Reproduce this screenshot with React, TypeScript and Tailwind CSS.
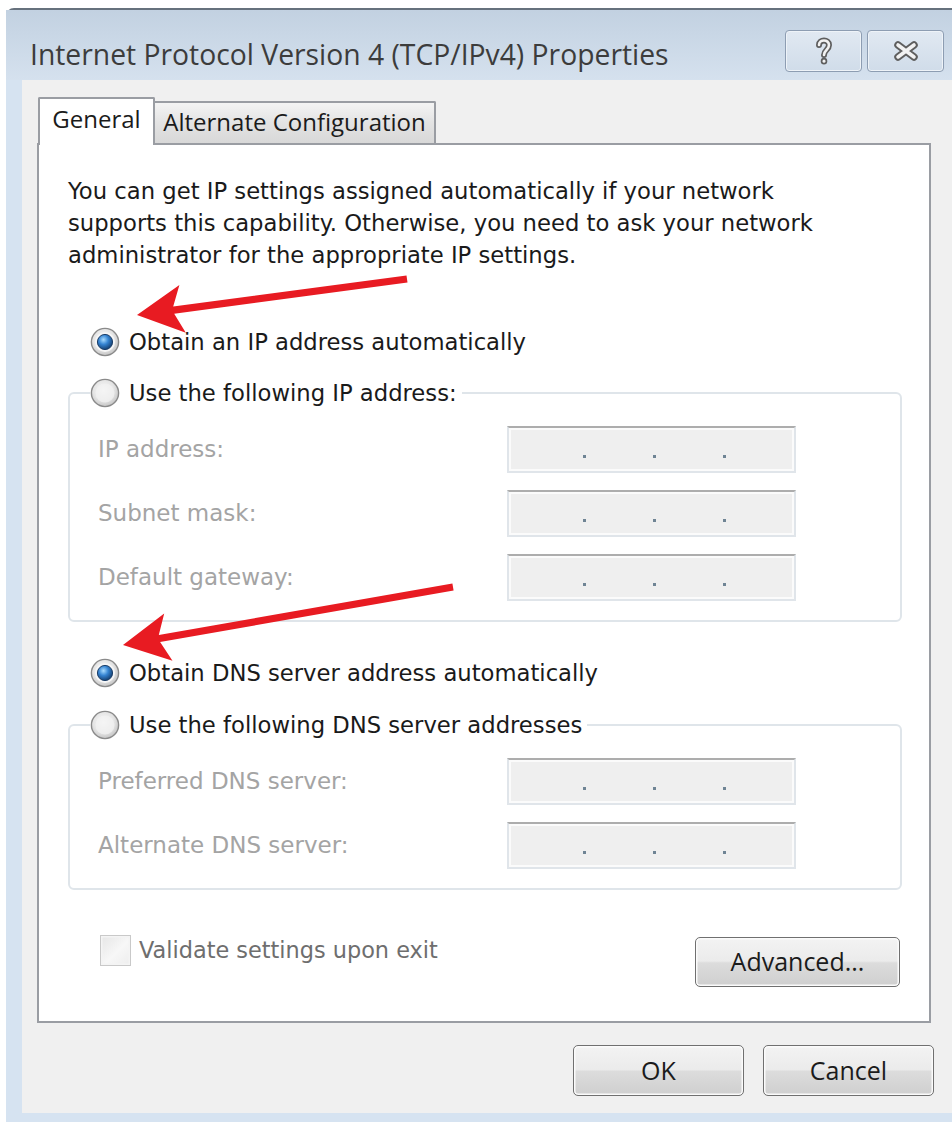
const ui = "font-['Open_Sans',sans-serif]";
const dlg = "font-['DejaVu_Sans',sans-serif]";

function Radio({ checked }: { checked?: boolean }) {
	return (
		<svg width="30" height="30" viewBox="0 0 30 30" className="shrink-0">
			<defs>
				<radialGradient id="rb-well" cx="45%" cy="40%" r="65%">
					<stop offset="0" stopColor="#fafafa" />
					<stop offset="0.6" stopColor="#e4e4e4" />
					<stop offset="1" stopColor="#bdbdbd" />
				</radialGradient>
				<radialGradient id="rb-dot" cx="40%" cy="35%" r="70%">
					<stop offset="0" stopColor="#a8dcff" />
					<stop offset="0.45" stopColor="#3584d2" />
					<stop offset="1" stopColor="#113866" />
				</radialGradient>
			</defs>
			<circle cx="15" cy="15" r="13.6" fill="url(#rb-well)" stroke="#8a8a8a" strokeWidth="1.4" />
			{checked ? (
				<>
					<circle cx="15" cy="15" r="10" fill="#f6f6f6" />
					<circle cx="15" cy="15" r="7.6" fill="url(#rb-dot)" stroke="#1d3f68" strokeWidth="1" />
				</>
			) : (
				<circle cx="15" cy="15" r="9.5" fill="#f2f2f2" opacity="0.7" />
			)}
		</svg>
	);
}

function IpBox() {
	return (
		<div className="h-[47px] w-[289px] shrink-0 border-2 border-[#e0e5ea] border-t-[#adadad] bg-[#efefef] shadow-[inset_0_0_0_2px_#fbfbfb]">
			<div className="flex gap-[67px] pl-[74px] pt-[27px]">
				<span className="size-[3px] bg-[#6f8494]" />
				<span className="size-[3px] bg-[#6f8494]" />
				<span className="size-[3px] bg-[#6f8494]" />
			</div>
		</div>
	);
}

function Field({ label }: { label: string }) {
	return (
		<div className="flex items-center">
			<span className="w-[409px] text-[23px] text-[#a4a4a4]">{label}</span>
			<IpBox />
		</div>
	);
}

function Group({ title, fields }: { title: string; fields: string[] }) {
	return (
		<fieldset className="ml-[29px] w-[834px] rounded-[6px] border-2 border-[#dfe5ea] pb-[19px]">
			<legend className="ml-[20px] flex h-[30px] items-center gap-[9px] pr-[5px]">
				<Radio />
				<span className="text-[22.7px] leading-[30px] text-[#1a1a1a]">{title}</span>
			</legend>
			<div className="flex flex-col gap-[17px] pl-[28px] pt-[18px]">
				{fields.map((f) => (
					<Field key={f} label={f} />
				))}
			</div>
		</fieldset>
	);
}

function RadioRow({ label, checked }: { label: string; checked?: boolean }) {
	return (
		<div className="ml-[51px] flex h-[30px] items-center gap-[9px]">
			<Radio checked={checked} />
			<span className="text-[22.7px] leading-[30px] text-[#1a1a1a]">{label}</span>
		</div>
	);
}

function Button({ label, w, h }: { label: string; w: string; h: string }) {
	return (
		<button
			type="button"
			className={`${ui} ${w} ${h} rounded-[5px] border-[1.5px] border-[#707070] bg-[linear-gradient(#f3f3f3_0%,#ebebeb_48%,#dcdcdc_52%,#cfcfcf_100%)] text-[25px] text-[#1b1b1b] shadow-[inset_0_0_0_1.5px_#fbfbfb]`}
		>
			{label}
		</button>
	);
}

function CaptionButton({ children }: { children: React.ReactNode }) {
	return (
		<div className="flex h-[42px] w-[77px] items-center justify-center rounded-[4px] border-[1.5px] border-[#8d9db2] bg-[linear-gradient(#e1e9f2,#d0dce9)] shadow-[inset_0_0_0_1px_#eef3f8]">
			{children}
		</div>
	);
}

// arrow polygon from tip back to tail: notched head plus a straight shaft
function arrowPoints(tip: [number, number], tail: [number, number]) {
	const [tx, ty] = tip;
	const len = Math.hypot(tail[0] - tx, tail[1] - ty);
	const ux = (tail[0] - tx) / len;
	const uy = (tail[1] - ty) / len;
	const nx = -uy;
	const ny = ux;
	const p = (a: number, b: number) => `${(tx + ux * a + nx * b).toFixed(1)},${(ty + uy * a + ny * b).toFixed(1)}`;
	return [p(0, 0), p(46, -24), p(37, -3.6), p(len, -3.6), p(len, 3.6), p(37, 3.6), p(46, 24)].join(" ");
}

export default function App() {
	return (
		<div className={`${dlg} relative h-[1122px] w-[952px] overflow-hidden bg-white pl-[6px] pt-[8px]`}>
			<div className="flex h-full flex-col rounded-tl-[8px] border-t-2 border-[#66717d] bg-[#d6e3f1]">
				{/* caption */}
				<div className="flex h-[70px] shrink-0 items-start justify-between bg-[linear-gradient(#c2d1e1,#d5e1ee)] pr-[8px] pl-[24px]">
					<span className={`${ui} mt-[29px] text-[28.3px] leading-[30px] text-[#3c3c3c]`}>
						Internet Protocol Version 4 (TCP/IPv4) Properties
					</span>
					<div className="mt-[20px] flex gap-[5px]">
						<CaptionButton>
							<svg width="20" height="28" viewBox="-10 -14 20 28">
								<g fill="none" strokeLinecap="round" strokeLinejoin="round">
									<path d="M-5 -6 C-5 -12 5 -12 5 -6 C5 -1 0 -1 0 4" stroke="#5e5e5e" strokeWidth="6" />
									<path d="M-5 -6 C-5 -12 5 -12 5 -6 C5 -1 0 -1 0 4" stroke="#f2f2f2" strokeWidth="2.6" />
									<path d="M0 10 L0 10.2" stroke="#5e5e5e" strokeWidth="6.5" />
									<path d="M0 10 L0 10.2" stroke="#f2f2f2" strokeWidth="3" />
								</g>
							</svg>
						</CaptionButton>
						<CaptionButton>
							<svg width="28" height="24" viewBox="-14 -12 28 24">
								<g fill="none" strokeLinecap="round">
									<path d="M-8 -6 L8 6 M-8 6 L8 -6" stroke="#5e5e5e" strokeWidth="7.5" />
									<path d="M-8 -6 L8 6 M-8 6 L8 -6" stroke="#f2f2f2" strokeWidth="3.6" />
								</g>
							</svg>
						</CaptionButton>
					</div>
				</div>

				<div className="flex flex-1">
					<div className="w-[16px] shrink-0" />
					<div className="flex flex-1 flex-col bg-[#f0f0f0] pl-[15px] pt-[17px]">
						{/* tabs */}
						<div className="relative z-10 -mb-[2px] ml-[1px] flex h-[48px] items-end">
							<div className={`${ui} flex h-[48px] w-[117px] items-start justify-center rounded-t-[2px] border-2 border-b-0 border-[#9a9da3] bg-white pt-[5px] text-[24px] leading-[30px] text-[#1b1b1b]`}>
								General
							</div>
							<div className={`${ui} mb-[2px] flex h-[42px] w-[281px] items-start justify-center rounded-tr-[2px] border-2 border-l-0 border-b-0 border-[#9a9da3] bg-[linear-gradient(#f4f4f4,#e3e3e3_50%,#d8d8d8)] pt-[4px] text-[24px] leading-[30px] text-[#1b1b1b]`}>
								Alternate Configuration
							</div>
						</div>

						{/* page */}
						<div className="h-[880px] w-[894px] border-2 border-[#9a9da3] bg-white">
							<p className="pl-[29px] pt-[30px] text-[22.7px] leading-[32px] text-[#1a1a1a]">
								You can get IP settings assigned automatically if your network
								<br />
								supports this capability. Otherwise, you need to ask your network
								<br />
								administrator for the appropriate IP settings.
							</p>

							<div className="mt-[56px]">
								<RadioRow label="Obtain an IP address automatically" checked />
							</div>
							<div className="mt-[21px]">
								<Group title="Use the following IP address:" fields={["IP address:", "Subnet mask:", "Default gateway:"]} />
							</div>

							<div className="mt-[36px]">
								<RadioRow label="Obtain DNS server address automatically" checked />
							</div>
							<div className="mt-[22px]">
								<Group title="Use the following DNS server addresses" fields={["Preferred DNS server:", "Alternate DNS server:"]} />
							</div>

							<div className="mt-[45px] ml-[29px] flex w-[834px] items-start justify-between pl-[32px] pr-[2px]">
								<div className="flex items-center gap-[8px]">
									<div className="size-[31px] border-[1.5px] border-[#c9c9c9] bg-[linear-gradient(135deg,#e6e6e6,#f7f7f7_55%,#ededed)] shadow-[inset_0_0_0_1.5px_#f4f4f4]" />
									<span className="text-[22.4px] leading-[31px] text-[#6e6e6e]">Validate settings upon exit</span>
								</div>
								<div className="mt-[2px]">
									<Button label="Advanced..." w="w-[205px]" h="h-[50px]" />
								</div>
							</div>
						</div>

						<div className="mt-[22px] flex justify-end gap-[19px] pr-[18px]">
							<Button label="OK" w="w-[171px]" h="h-[51px]" />
							<Button label="Cancel" w="w-[171px]" h="h-[51px]" />
						</div>
					</div>
				</div>

				<div className="h-[9px] shrink-0" />
			</div>

			<svg className="pointer-events-none absolute inset-0" width="952" height="1122">
				<polygon points={arrowPoints([137, 315], [407, 279])} fill="#e81b22" />
				<polygon points={arrowPoints([123, 645], [453, 587])} fill="#e81b22" />
			</svg>
		</div>
	);
}
